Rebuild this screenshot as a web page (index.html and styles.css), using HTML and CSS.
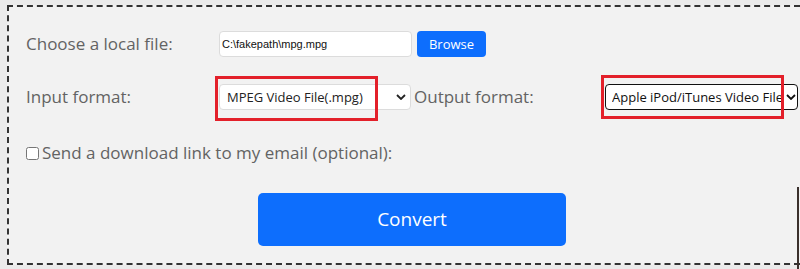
FILE: index.html
```html
<!DOCTYPE html>
<html>
<head>
<meta charset="utf-8">
<link rel="stylesheet" href="styles.css">
</head>
<body>
<div class="panel">
  <form class="form">
    <div class="label">Choose a local file:</div>
    <div class="filebox">C:\fakepath\mpg.mpg</div>
    <div class="browse-cell"><span class="browse">Browse</span></div>
    <div></div>

    <div class="label r2">Input format:</div>
    <div class="r2 cell">
      <div class="select select-in">
        <span class="select-text">MPEG Video File(.mpg)</span>
        <svg class="chev" width="10" height="6" viewBox="0 0 10 6"><path d="M1 1 L5 5 L9 1" fill="none" stroke="#222" stroke-width="1.8"/></svg>
      </div>
      <div class="mark mark-in"></div>
    </div>
    <div class="label r2 out-label">Output format:</div>
    <div class="r2 cell">
      <div class="select select-out">
        <span class="select-text">Apple iPod/iTunes Video File(.m4v)</span>
        <svg class="chev" width="10" height="6" viewBox="0 0 10 6"><path d="M1 1 L5 5 L9 1" fill="none" stroke="#111" stroke-width="1.8"/></svg>
      </div>
      <div class="mark mark-out"></div>
    </div>

    <label class="check r3"><input type="checkbox" class="box"><span>Send a download link to my email (optional):</span></label>

    <div class="r4 convert-cell"><span class="convert">Convert</span></div>
  </form>
</div>
<div class="edge"></div>
</body>
</html>
```

FILE: styles.css
```css
html, body {
  margin: 0;
  padding: 0;
}
body {
  background: #ebebeb;
  font-family: "Open Sans", "Liberation Sans", sans-serif;
  width: 800px;
  height: 269px;
  overflow: hidden;
  position: relative;
}
.panel {
  box-sizing: border-box;
  margin: 5px 0 0 7px;
  width: 793px;
  border: 2px dashed #333;
  border-right: none;
  background: #f2f2f2;
  padding: 24px 0 17px 17px;
}
.form {
  display: grid;
  grid-template-columns: 193px 193px 193px 195px;
  margin: 0;
}
.label {
  font-size: 17px;
  color: #636363;
  line-height: 26px;
  height: 26px;
  white-space: nowrap;
}
.out-label {
  padding-left: 2px;
}
.r2 { margin-top: 27px; }
.r3 { margin-top: 31px; }
.r4 { margin-top: 28px; }
.filebox {
  box-sizing: border-box;
  width: 193px;
  height: 26px;
  background: #fff;
  border: 1px solid #dcdcdc;
  border-radius: 4px;
  font-family: "Liberation Sans", Arial, sans-serif;
  font-size: 11px;
  color: #111;
  line-height: 24px;
  padding-left: 2px;
}
.browse-cell {
  padding-left: 5px;
}
.browse {
  display: inline-block;
  width: 69px;
  height: 26px;
  line-height: 26px;
  text-align: center;
  background: #0d6efd;
  color: #fff;
  font-size: 13px;
  border-radius: 4px;
}
.cell {
  position: relative;
}
.select {
  box-sizing: border-box;
  height: 26px;
  background: #fff;
  display: flex;
  align-items: center;
  border-radius: 4px;
  font-size: 13px;
  color: #222;
}
.select-in {
  width: 192px;
  border: 1px solid #dcdcdc;
  padding: 0 4px 0 7px;
}
.select-out {
  width: 193px;
  border: 1.5px solid #111;
  padding: 0 1px 0 6px;
  color: #111;
}
.select-text {
  flex: 1;
  min-width: 0;
  overflow: hidden;
  white-space: nowrap;
}
.select-out .select-text {
  padding-right: 3px;
}
.chev {
  flex: none;
  margin-left: 2px;
}
.mark {
  position: absolute;
  border: 3px solid #e3202a;
  box-sizing: border-box;
  pointer-events: none;
}
.mark-in {
  left: -4px;
  top: -8px;
  width: 163px;
  height: 45px;
}
.mark-out {
  left: -4px;
  top: -9px;
  width: 183px;
  height: 44px;
}
.check {
  grid-column: 1 / -1;
  display: flex;
  align-items: center;
  gap: 3px;
  font-size: 17px;
  color: #636363;
  line-height: 24px;
  height: 24px;
}
.box {
  margin: 0;
  width: 13px;
  height: 13px;
}
.convert-cell {
  grid-column: 2 / 4;
  display: flex;
  justify-content: center;
}
.convert {
  display: block;
  width: 308px;
  height: 53px;
  line-height: 53px;
  text-align: center;
  background: #0d6efd;
  color: #fff;
  font-size: 19px;
  border-radius: 5px;
}
.edge {
  position: absolute;
  right: 1px;
  top: 187px;
  width: 2px;
  height: 82px;
  background: #3a302c;
}
```
